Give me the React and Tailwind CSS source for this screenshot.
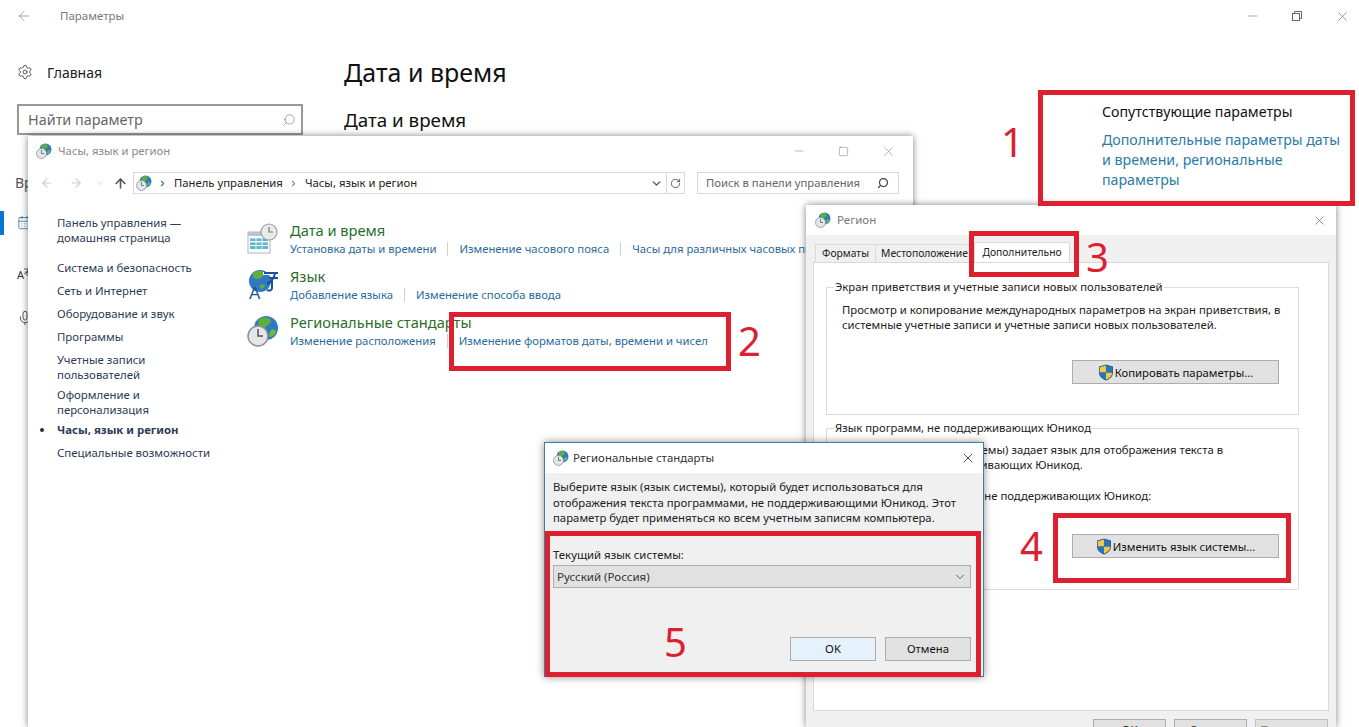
import React from 'react';
import { ArrowLeft, ArrowRight, ArrowUp, CalendarDays, ChevronDown, ChevronRight, Minus, RotateCw, Search, Settings, Square, X, Mic } from 'lucide-react';

const font = "font-['Noto_Sans','Open_Sans',sans-serif]";

const GlobeClock = ({ size = 16 }) => (
  <svg width={size} height={size} viewBox="0 0 32 32" className="shrink-0">
    <circle cx="19" cy="13" r="12" fill="#2f78c4" />
    <path d="M12 4c4-3 10-2 12 1 1 3-3 4-5 7-2 2-5 1-7-1-1-2-1-5 0-7z" fill="#5fae3c" />
    <path d="M24 15c3-1 5 0 5 2-1 3-4 5-6 5-1-2-1-5 1-7z" fill="#6dbb46" />
    <circle cx="11" cy="21" r="10" fill="#e4e6e8" stroke="#8a9096" strokeWidth="1.500" />
    <path d="M11 14v7h5" fill="none" stroke="#555" strokeWidth="1.500" />
  </svg>
);

const CalendarClock = () => (
  <svg width="32" height="32" viewBox="0 0 32 32" className="shrink-0">
    <rect x="1" y="9" width="22" height="21" fill="#fff" stroke="#a9b3ba" />
    <rect x="1" y="9" width="22" height="4" fill="#b8c4cc" />
    <g fill="#5fb7d2">
      <rect x="3" y="15" width="18" height="3" />
      <rect x="3" y="19" width="18" height="3" />
      <rect x="3" y="23" width="18" height="3" />
    </g>
    <path d="M3 15h18M3 19h18M9 15v12M15 15v12" stroke="#fff" strokeWidth="0.800" />
    <circle cx="22" cy="9" r="8" fill="#e8eaec" stroke="#9aa1a7" strokeWidth="1.200" />
    <path d="M22 4v5h4" fill="none" stroke="#777" strokeWidth="1.200" />
  </svg>
);

const LanguageIcon = () => (
  <svg width="32" height="32" viewBox="0 0 32 32" className="shrink-0">
    <circle cx="13" cy="12" r="11" fill="#2f78c4" />
    <path d="M6 4c4-3 9-3 11 0 0 4-4 6-8 6-2 0-4-3-3-6zM13 16c2-1 4-1 5 0-1 2-2 4-4 4-1-1-2-2-1-4z" fill="#5fae3c" />
    <path d="M16 3h15l-1 3H16z" fill="#fff" />
    <path d="M17 4h14M28 4c-1 6-4 9-8 11M22 9h9M25 9v10c0 3-3 3-5 2" fill="none" stroke="#1c4f9c" strokeWidth="2" />
    <text x="2" y="30" fontSize="17" fontFamily="Liberation Sans" fill="#1c4f9c">A</text>
  </svg>
);

const Shield = () => (
  <svg width="16" height="17" viewBox="0 0 16 17" className="shrink-0">
    <path d="M8 .5l7 2v6c0 4-3 6.500-7 8-4-1.500-7-4-7-8v-6z" fill="#2b5f93" />
    <path d="M8 1.500v7H1.800V3.200zM8 8.500h6.200c0 3.500-2.500 5.500-6.200 7z" fill="#f2c84b" />
    <path d="M8 1.500l6.200 1.700v5.300H8zM8 8.500v7c-3.700-1.500-6.200-3.500-6.200-7z" fill="#2a74b8" />
  </svg>
);

const RestoreIcon = () => (
  <svg width="10" height="10" viewBox="0 0 10 10" fill="none" stroke="#666" strokeWidth="1">
    <rect x="0.500" y="2.500" width="7" height="7" />
    <path d="M2.500 2.500v-2h7v7h-2" />
  </svg>
);

const WinBtn = ({ children, className = '' }) => (
  <button className={`h-[23px] bg-[#e1e1e1] border border-[#adadad] text-[11.300px] text-[#111] flex items-center justify-center gap-[1px] ${className}`}>
    {children}
  </button>
);

const CpLink = ({ children }) => <span className="whitespace-nowrap text-[#2a6a9e]">{children}</span>;
const Sep = () => <span className="w-px h-[14px] bg-[#ccd3d8] mx-[11px] shrink-0" />;

const Category = ({ icon, title, links }) => (
  <div className="flex h-[46px] gap-[12px]">
    <div className="w-[31px] pt-[2px] flex justify-center">{icon}</div>
    <div>
      <div className="text-[14.650px] leading-[18px] text-[#2a6e2a]">{title}</div>
      <div className="flex items-center text-[11.300px] leading-[18px] mt-[1px]">
        {links.map((l, i) => (
          <React.Fragment key={l}>
            {i > 0 && <Sep />}
            <CpLink>{l}</CpLink>
          </React.Fragment>
        ))}
      </div>
    </div>
  </div>
);

const SettingsWindow = () => (
  <div className="h-full flex flex-col bg-white">
    <div className="h-[32px] flex items-center shrink-0">
      <ArrowLeft size={16} strokeWidth={1} className="ml-[16px] text-[#777]" />
      <span className="ml-[28px] text-[11.500px] text-[#777]">Параметры</span>
      <div className="ml-auto flex items-center">
        <Minus size={14} strokeWidth={1} className="text-[#666]" />
        <span className="ml-[32px]"><RestoreIcon /></span>
        <X size={15} strokeWidth={1} className="ml-[33px] mr-[9px] text-[#666]" />
      </div>
    </div>
    <div className="flex flex-1">
      <div className="w-[344px] shrink-0 pl-[17px]">
        <div className="flex items-center h-[24px] mt-[28px]">
          <Settings size={16} strokeWidth={1.200} className="text-[#333]" />
          <span className="ml-[14px] text-[14px] text-[#222]">Главная</span>
        </div>
        <div className="mt-[20px] w-[286px] h-[31px] border-2 border-[#999] flex items-center justify-between pl-[9px] pr-[5px]">
          <span className="text-[14.400px] text-[#666]">Найти параметр</span>
          <Search size={14} strokeWidth={1} className="-scale-x-100 text-[#666]" />
        </div>
        <div className="mt-[37px] -ml-[2px] text-[14px] text-[#555]">Время</div>
        <div className="mt-[18px] -ml-[17px] h-[24px] w-[4px] bg-[#0078d7]" />
        <div className="mt-[-20px] text-[#2a6a9e]"><CalendarDays size={15} strokeWidth={1.200} /></div>
        <div className="mt-[37px] flex items-start text-[11px] text-[#333]">
          A
          <svg width="6" height="8" viewBox="0 0 6 8" className="mt-px" fill="none" stroke="#333" strokeWidth="0.800"><path d="M0 1h6M4 1c0 3-2 4-4 5M1 4h5M3 4v4" /></svg>
        </div>
        <Mic size={16} strokeWidth={1.200} className="mt-[26px] text-[#333]" />
      </div>
      <div className="flex-1 flex">
        <div className="w-[758px] shrink-0">
          <div className="mt-[20px] text-[25px] leading-[40px] text-[#111]">Дата и время</div>
          <div className="mt-[15px] text-[18.800px] leading-[26px] text-[#111]">Дата и время</div>
        </div>
        <div className="w-[245px] mt-[69px]">
          <div className="text-[14.200px] leading-[22px] text-[#111]">Сопутствующие параметры</div>
          <div className="mt-[7px] text-[14.200px] leading-[20px] text-[#2a7ba6]">Дополнительные параметры даты<br />и времени, региональные<br />параметры</div>
        </div>
      </div>
    </div>
  </div>
);

const ControlPanel = () => (
  <div className="absolute left-[28px] top-[136px] w-[885px] bottom-0 bg-white shadow-[0_0_7px_rgba(0,0,0,0.5)] flex flex-col">
    <div className="h-[30px] flex items-center shrink-0 pl-[8px]">
      <GlobeClock />
      <span className="ml-[6px] text-[11.300px] text-[#8a8a8a]">Часы, язык и регион</span>
      <div className="ml-auto flex items-center text-[#888]">
        <Minus size={14} strokeWidth={1} />
        <Square size={11} strokeWidth={1} className="ml-[32px] text-[#666]" />
        <X size={15} strokeWidth={1} className="ml-[32px] mr-[17px]" />
      </div>
    </div>
    <div className="flex items-center h-[22px] mt-[6px] shrink-0 pl-[12px]">
      <ArrowLeft size={14} className="text-[#ccc]" />
      <ArrowRight size={14} className="ml-[15px] text-[#ccc]" />
      <ChevronDown size={9} className="ml-[12px] text-[#ccc]" />
      <ArrowUp size={15} strokeWidth={2.500} className="ml-[9px] text-[#555]" />
      <div className="ml-[5px] w-[552px] h-full border border-[#d9d9d9] flex items-center pl-[2px] text-[11.300px] text-[#222]">
        <GlobeClock />
        <ChevronRight size={9} strokeWidth={3} className="ml-[6px] text-[#666]" />
        <span className="ml-[7px]">Панель управления</span>
        <ChevronRight size={9} strokeWidth={3} className="ml-[6px] text-[#888]" />
        <span className="ml-[7px]">Часы, язык и регион</span>
        <ChevronDown size={13} strokeWidth={2.500} className="ml-auto mr-[3px] text-[#555]" />
        <div className="w-[18px] h-full border-l border-[#d9d9d9] flex items-center justify-center">
          <RotateCw size={11} strokeWidth={2} className="text-[#555]" />
        </div>
      </div>
      <div className="ml-[12px] w-[202px] h-full border border-[#d9d9d9] flex items-center justify-between pl-[8px] pr-[9px] text-[11.300px] text-[#666]">
        <span>Поиск в панели управления</span>
        <Search size={12} strokeWidth={2.500} className="-scale-x-100 text-[#444]" />
      </div>
    </div>
    <div className="flex flex-1 mt-[21px]">
      <div className="w-[219px] shrink-0 pl-[29px] text-[11.400px] leading-[15px] text-[#2d3b55]">
        <div>Панель управления —<br />домашняя страница</div>
        <div className="mt-[15px]">Система и безопасность</div>
        <div className="mt-[8px]">Сеть и Интернет</div>
        <div className="mt-[8px]">Оборудование и звук</div>
        <div className="mt-[8px]">Программы</div>
        <div className="mt-[8px]">Учетные записи<br />пользователей</div>
        <div className="mt-[5px]">Оформление и<br />персонализация</div>
        <div className="mt-[5px] font-bold flex items-center">
          <span className="-ml-[17px] mr-[13px] w-[4px] h-[4px] rounded-full bg-[#1f2d4d]" />
          Часы, язык и регион
        </div>
        <div className="mt-[8px]">Специальные возможности</div>
      </div>
      <div className="flex-1 min-w-0 overflow-hidden pt-[6px]">
        <Category icon={<CalendarClock />} title="Дата и время" links={['Установка даты и времени', 'Изменение часового пояса', 'Часы для различных часовых поясов']} />
        <Category icon={<LanguageIcon />} title="Язык" links={['Добавление языка', 'Изменение способа ввода']} />
        <Category icon={<GlobeClock size={32} />} title="Региональные стандарты" links={['Изменение расположения', 'Изменение форматов даты, времени и чисел']} />
      </div>
    </div>
  </div>
);

const GroupBox = ({ legend, className = '', children }) => (
  <fieldset className={`border border-[#dcdcdc] pl-[15px] ${className}`}>
    <legend className="-ml-[8px] px-px text-[11.300px] leading-[14px] text-[#222]">{legend}</legend>
    {children}
  </fieldset>
);

const RegionWindow = () => (
  <div className="absolute left-[806px] top-[205px] w-[530px] bottom-0 bg-[#f0f0f0] shadow-[0_0_7px_rgba(0,0,0,0.5)] flex flex-col">
    <div className="h-[30px] bg-white flex items-center pl-[9px] shrink-0">
      <GlobeClock />
      <span className="ml-[6px] text-[11.500px] text-[#777]">Регион</span>
      <X size={15} strokeWidth={1} className="ml-auto mr-[9px] text-[#555]" />
    </div>
    <div className="flex items-end h-[27px] pl-[9px] shrink-0 text-[10.300px] text-[#222]">
      <div className="h-[18px] w-[61px] border border-b-0 border-[#d9d9d9] flex items-center justify-center">Форматы</div>
      <div className="h-[18px] w-[98px] border-t border-r border-[#d9d9d9] flex items-center justify-center whitespace-nowrap overflow-hidden">Местоположение</div>
      <div className="h-[20px] w-[96px] bg-white border border-b-0 border-[#d9d9d9] flex items-center justify-center">Дополнительно</div>
    </div>
    <div className="mx-[7px] bg-white border border-[#d9d9d9] h-[449px] shrink-0 pl-[12px] pr-[29px] pt-[17px] text-[11.300px] leading-[15px] text-[#222]">
      <GroupBox legend="Экран приветствия и учетные записи новых пользователей" className="h-[135px]">
        <div className="mt-[8px] w-[445px]">
          Просмотр и копирование международных параметров на экран приветствия, в системные учетные записи и учетные записи новых пользователей.
        </div>
        <div className="flex justify-end pr-[19px] mt-[28px]">
          <WinBtn className="w-[207px] h-[24px]"><Shield />Копировать параметры...</WinBtn>
        </div>
      </GroupBox>
      <GroupBox legend="Язык программ, не поддерживающих Юникод" className="h-[169px] mt-[6px]">
        <div className="mt-[7px] w-[445px]">
          Этот параметр (язык системы) задает язык для отображения текста в программах, не поддерживающих Юникод.
        </div>
        <div className="mt-[16px]">Текущий язык программ, не поддерживающих Юникод:</div>
        <div className="flex justify-end pr-[19px] mt-[31px]">
          <WinBtn className="w-[207px] h-[24px]"><Shield />Изменить язык системы...</WinBtn>
        </div>
      </GroupBox>
    </div>
    <div className="flex justify-end gap-[8px] pr-[8px] mt-[8px]">
      <WinBtn className="w-[73px]">OK</WinBtn>
      <WinBtn className="w-[73px]">Отмена</WinBtn>
      <WinBtn className="w-[73px] bg-[#cccccc] border-[#bfbfbf] text-[#888]">Применить</WinBtn>
    </div>
  </div>
);

const LocaleDialog = () => (
  <div className="absolute left-[544px] top-[442px] w-[440px] h-[235px] bg-[#f0f0f0] border border-[#3a7fa8] shadow-[0_0_8px_rgba(0,0,0,0.45)] flex flex-col">
    <div className="h-[30px] bg-white flex items-center pl-[8px] shrink-0">
      <GlobeClock />
      <span className="ml-[4px] text-[11.400px] text-[#333]">Региональные стандарты</span>
      <X size={16} strokeWidth={1.200} className="ml-auto mr-[7px] text-[#222]" />
    </div>
    <div className="px-[8px] pt-[6px] text-[11.350px] leading-[15.500px] text-[#222]">
      <div>Выберите язык (язык системы), который будет использоваться для<br />отображения текста программами, не поддерживающими Юникод. Этот<br />параметр будет применяться ко всем учетным записям компьютера.</div>
      <div className="mt-[21px]">Текущий язык системы:</div>
      <div className="mt-[3px] h-[23px] w-[418px] bg-[#e1e1e1] border border-[#adadad] flex items-center justify-between px-[3px] text-[11.500px] text-[#333]">
        Русский (Россия)
        <ChevronDown size={14} strokeWidth={1.300} className="text-[#444]" />
      </div>
      <div className="mt-[49px] flex justify-end gap-[9px] w-[418px]">
        <WinBtn className="w-[86px] h-[24px] bg-[#e5f1fb] border-[#2b7aa8]">OK</WinBtn>
        <WinBtn className="w-[86px] h-[24px]">Отмена</WinBtn>
      </div>
    </div>
  </div>
);

const Frame = ({ className }) => (
  <div className={`absolute border-[5px] border-[#dd2030] pointer-events-none ${className}`} />
);

const Num = ({ children, className }) => (
  <span className={`absolute text-[40px] leading-[48px] text-[#dd2030] ${className}`}>{children}</span>
);

export default function App() {
  return (
    <div className={`relative h-[727px] w-[1359px] overflow-hidden bg-white ${font}`}>
      <SettingsWindow />
      <ControlPanel />
      <RegionWindow />
      <LocaleDialog />

      <Frame className="left-[1038px] top-[90px] w-[317px] h-[116px]" />
      <Frame className="left-[449px] top-[312px] w-[282px] h-[59px]" />
      <Frame className="left-[969px] top-[231px] w-[110px] h-[46px]" />
      <Frame className="left-[1053px] top-[513px] w-[238px] h-[70px]" />
      <Frame className="left-[545px] top-[531px] w-[436px] h-[146px]" />
      <Num className="left-[1001px] top-[118px]">1</Num>
      <Num className="left-[738px] top-[317px]">2</Num>
      <Num className="left-[1086px] top-[233px]">3</Num>
      <Num className="left-[1020px] top-[522px]">4</Num>
      <Num className="left-[664px] top-[618px]">5</Num>
    </div>
  );
}
